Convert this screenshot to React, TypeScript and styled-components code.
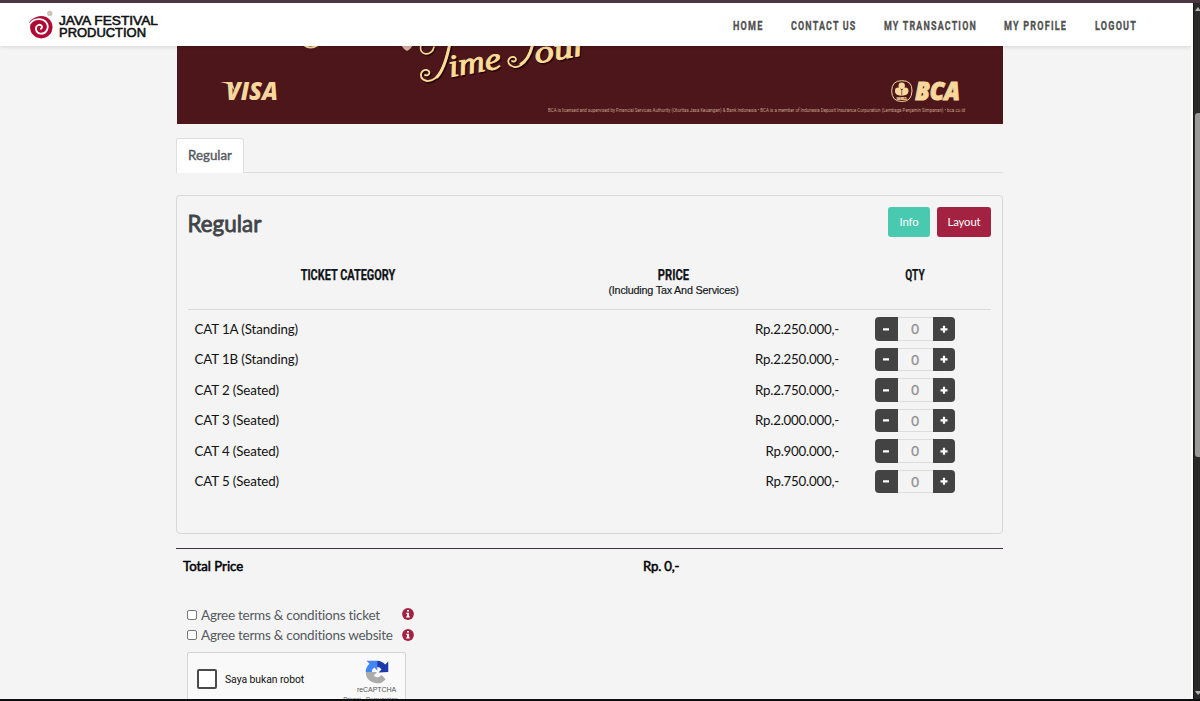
import React from 'react';
import styled, { createGlobalStyle } from 'styled-components';

const Global = createGlobalStyle`
  * { box-sizing: border-box; }
  body { margin: 0; background: #f4f4f4; font-family: Lato, "Liberation Sans", sans-serif; color: #111; }
`;

const Screen = styled.div`
  width: 1200px;
  height: 701px;
  overflow: hidden;
  display: flex;
  flex-direction: column;
  border-top: 3px solid #4b3541;
  border-bottom: 2px solid #0d0d0f;
`;
const Body = styled.div`
  flex: 1;
  min-height: 0;
  display: flex;
`;
const Page = styled.div`
  width: 1193px;
  height: 696px;
  overflow: hidden;
  border-right: 2px solid #fff;
  background: #f4f4f4;
`;
const Scrollbar = styled.div`
  width: 7px;
  height: 696px;
  background: #2b2b29;
  border-left: 1px solid #171717;
  display: flex;
  flex-direction: column;
  align-items: flex-end;
  justify-content: space-between;
  padding: 4px 0;
`;
const Thumb = styled.div`
  width: 5px;
  height: 344px;
  margin-top: -132px;
  border-radius: 3px 0 0 3px;
  background: #9b9b9a;
`;

const Header = styled.header`
  position: relative;
  z-index: 2;
  height: 43px;
  background: #fff;
  box-shadow: 0 1px 4px rgba(0, 0, 0, 0.13);
  display: flex;
  align-items: center;
  justify-content: space-between;
  padding: 0 54px 0 28px;
`;
const Nav = styled.nav`
  display: flex;
  gap: 28px;
  padding-top: 1px;
`;
const NavItem = styled.a<{ $w: number; $scale: number }>`
  width: ${p => p.$w}px;
  white-space: nowrap;
  font: 700 13.5px/20px Roboto, sans-serif;
  letter-spacing: 1.8px;
  color: #505050;
  -webkit-text-stroke: 0.3px #505050;
  transform: scaleX(${p => p.$scale});
  transform-origin: left center;
`;

const Main = styled.main`
  width: 827px;
  margin-left: 176px;
`;
const Banner = styled.div`
  height: 78px;
  margin-left: 1px;
  background: #4c161a;
  overflow: hidden;
  svg { display: block; }
`;
const Tabs = styled.div`
  display: flex;
  height: 49px;
  padding-top: 14px;
  border-bottom: 1px solid #dedede;
`;
const Tab = styled.div`
  width: 68px;
  height: 35px;
  background: #fff;
  border: 1px solid #dedede;
  border-bottom: 0;
  border-radius: 3px 3px 0 0;
  text-align: center;
  font-size: 13.3px;
  line-height: 33px;
  font-weight: 400;
  -webkit-text-stroke: 0.4px #555a60;
  color: #555a60;
`;
const Card = styled.section`
  height: 339px;
  margin-top: 22px;
  padding: 11px 11px 0;
  border: 1px solid #d8d8d8;
  border-radius: 4px;
`;
const CardHead = styled.div`
  display: flex;
  align-items: flex-start;
  height: 52px;
`;
const Title = styled.h2`
  margin: 0 0 0 -0.5px;
  flex: 1;
  font-size: 22.4px;
  line-height: 33px;
  font-weight: 400;
  -webkit-text-stroke: 0.8px #414447;
  color: #414447;
`;
const Button = styled.button<{ $w: number; $bg: string }>`
  width: ${p => p.$w}px;
  height: 30px;
  margin-left: 7px;
  padding: 0 0 2px;
  border: 0;
  border-radius: 3px;
  background: ${p => p.$bg};
  color: #fff;
  font: 400 11.3px Lato, sans-serif;
  letter-spacing: -0.1px;
`;
const TableHead = styled.div`
  display: grid;
  grid-template-columns: 320px 331px 152px;
  height: 51px;
  text-align: center;
  border-bottom: 1px solid #dadada;
  padding-top: 8px;
`;
const HeadLabel = styled.div<{ $scale: number }>`
  font: 700 14px/17px Roboto, sans-serif;
  white-space: nowrap;
  transform: scaleX(${p => p.$scale});
  color: #111518;
  -webkit-text-stroke: 0.25px #111518;
`;
const HeadNote = styled.div`
  font: 400 10.8px/13px "Liberation Sans", sans-serif;
  letter-spacing: -0.21px;
  -webkit-text-stroke: 0.15px #111518;
  color: #111518;
`;
const Rows = styled.div`
  padding-top: 3.5px;
`;
const Row = styled.div`
  display: grid;
  grid-template-columns: 420px 231px 36px 80px;
  height: 30.5px;
  align-items: center;
  font-size: 13.3px;
`;
const Name = styled.div`
  padding-left: 6.5px;
  letter-spacing: -0.1px;
`;
const Amount = styled.div`
  text-align: right;
  letter-spacing: -0.22px;
`;
const Stepper = styled.div`
  grid-column: 4;
  display: flex;
  height: 23.5px;
  border-radius: 4px;
  overflow: hidden;
`;
const Step = styled.button`
  width: 22.5px;
  padding: 0;
  border: 0;
  background: #434343;
  display: grid;
  place-items: center;
`;
const Count = styled.div`
  flex: 1;
  border: solid #dcdcdc;
  border-width: 1px 0;
  text-align: center;
  line-height: 22.5px;
  color: #929292;
  -webkit-text-stroke: 0.35px #929292;
`;
const Total = styled.div`
  display: flex;
  height: 37px;
  margin-top: 14px;
  border-top: 1px solid #3c3346;
  padding-left: 7px;
  font-size: 13.2px;
  font-weight: 400;
  line-height: 35px;
  -webkit-text-stroke: 0.5px #000;
  color: #000;
`;
const TotalLabel = styled.div`
  width: 460px;
`;
const TotalValue = styled.div`
  letter-spacing: -0.2px;
`;
const Terms = styled.div`
  padding: 19.5px 0 0 11px;
`;
const Term = styled.div`
  display: flex;
  align-items: center;
  height: 20.5px;
  color: #54595e;
  font-size: 13.5px;
  span { width: 201px; letter-spacing: -0.25px; white-space: nowrap; line-height: 18px; }
`;
const Box = styled.i<{ $size: number }>`
  display: block;
  width: ${p => p.$size}px;
  height: ${p => p.$size}px;
  border: ${p => (p.$size > 15 ? '2px solid #4a4a4a' : '1px solid #777')};
  border-radius: 2px;
  background: #fff;
  margin-right: ${p => (p.$size > 15 ? 8.5 : 4)}px;
`;
const Captcha = styled.div`
  display: flex;
  width: 219px;
  height: 56px;
  margin: 6px 0 0 11px;
  padding-left: 8.5px;
  border: 1px solid #d3d3d3;
  border-radius: 2px;
  background: #f9f9f9;
  font: 400 10.4px Roboto, sans-serif;
  letter-spacing: -0.06px;
`;
const CaptchaCheck = styled.div`
  display: flex;
  align-items: center;
  width: 147px;
  height: 53px;
`;
const CaptchaBrand = styled.div`
  width: 66px;
  display: flex;
  flex-direction: column;
  align-items: center;
  padding: 7px 0 0 9px;
  font: 400 7px/12px "Liberation Sans", sans-serif;
  color: #555;
  white-space: nowrap;
`;
const Legal = styled.small`
  font-size: 6px;
  line-height: 7px;
  margin: 0 12px 0 0;
`;

const Logo = () => (
  <svg width="134" height="34" viewBox="28 8 134 34">
    <circle cx="49.8" cy="13.4" r="2.7" fill="#cbc4b9" />
    <circle cx="41.3" cy="27.2" r="11.2" fill="#ae0c37" />
    <path d="M29 22.5Q33 16.5 39 17.6L46 18.6Q36 17 32 23Z" fill="#ae0c37" />
    <path d="M30.4 23.2C34 18.3 42.5 17.6 46.3 22.5C50 27.5 46 34.4 40.3 33.6C35.4 32.7 34.4 26.6 38.4 25C41.4 24 43.3 27.5 40.9 28.8" fill="none" stroke="#fff" strokeWidth="1.8" strokeLinecap="round" />
    <g fontFamily="Liberation Sans" fontSize="12.3" fill="#111" stroke="#111" strokeWidth=".55">
      <text x="59" y="24.7" textLength="99" lengthAdjust="spacingAndGlyphs">JAVA FESTIVAL</text>
      <text x="59" y="36.7" textLength="87" lengthAdjust="spacingAndGlyphs">PRODUCTION</text>
    </g>
  </svg>
);

const BannerArt = () => (
  <svg width="826" height="78" viewBox="177 46 826 78">
    <path d="M304 45Q310 50 318 45" fill="none" stroke="#f5d99b" strokeWidth="2" />
    <path d="M401 45h12l-3 4l-3 2l-3-2z" fill="#d9b1a0" />
    {['#260709', '#fbdd97'].map((c, i) => (
      <g key={c} transform={i ? undefined : 'translate(1.3 1.5)'} fill="none" stroke={c} strokeLinecap="round">
        <path d="M421 45C418 56 432 57 434 47" strokeWidth="1.6" />
        <path d="M450 43C446 61 440 82 427 81C418 79 420 69 427 70C432 72 428 77 425 75" strokeWidth="1.8" />
        <path d="M450 43C447 58 443 71 437 77" strokeWidth="3" />
        <path d="M533 43C529 56 524 68 514 67C505 64 508 56 514 57C518 59 515 63 512 61" strokeWidth="1.8" />
        <path d="M533 43C531 52 527 61 521 64" strokeWidth="3" />
        <g fill={c} stroke={c} strokeWidth=".9" fontFamily="Liberation Serif" fontStyle="italic">
          <text transform="translate(450 77) rotate(-10)" fontSize="31" textLength="53" lengthAdjust="spacingAndGlyphs">ime</text>
          <text transform="translate(536 63.5) rotate(-10)" fontSize="31" textLength="54" lengthAdjust="spacingAndGlyphs">our</text>
        </g>
      </g>
    ))}
    <g fill="#f7d79c" fontFamily="Open Sans" fontWeight="800" fontStyle="italic">
      <text x="226" y="100.2" fontSize="25" textLength="52" lengthAdjust="spacingAndGlyphs">VISA</text>
      <path d="M220 82h12l3 9l-5-6q-4-2-10-3z" />
      <text x="915" y="100.2" fontSize="25" textLength="45" lengthAdjust="spacingAndGlyphs" stroke="#f7d79c" strokeWidth="1">BCA</text>
    </g>
    <path d="M901.7 80.7Q891.7 80.7 891.7 91T901.7 101.5T912 91T901.7 80.7Z" fill="none" stroke="#f7d79c" strokeWidth="1" />
    <g fill="#f7d79c">
      <circle cx="901.7" cy="85.8" r="3.2" />
      <circle cx="898" cy="90.5" r="3" />
      <circle cx="905.4" cy="90.5" r="3" />
      <path d="M895 91q0 4.5 6.2 4.7h1q6.2-.2 6.2-4.7l-4-1h-5z" />
      <path d="M901.7 90v5.5" stroke="#4c161a" strokeWidth=".6" />
      <text x="896.5" y="100" fontFamily="Roboto" fontWeight="700" fontSize="3.6" textLength="10.5">BANK BCA</text>
    </g>
    <text x="548" y="111.8" fill="#c9a18c" fontFamily="Roboto" fontSize="4.7" textLength="417" lengthAdjust="spacingAndGlyphs">
      BCA is licensed and supervised by Financial Services Authority (Otoritas Jasa Keuangan) &amp; Bank Indonesia • BCA is a member of Indonesia Deposit Insurance Corporation (Lembaga Penjamin Simpanan) • bca.co.id
    </text>
  </svg>
);

const Sign = ({ plus }: { plus?: boolean }) => (
  <svg width="8" height="8" viewBox="0 0 8 8">
    <path d={plus ? 'M.5 4.3h7M4 .8v7' : 'M1 4.3h6'} stroke="#fff" strokeWidth="2.2" />
  </svg>
);

const InfoSvg = styled.svg`
  margin-top: -1.5px;
`;
const InfoIcon = () => (
  <InfoSvg width="12" height="12" viewBox="0 0 12 12">
    <circle cx="6" cy="6" r="5.9" fill="#a32242" />
    <path d="M5 2h2v1.6H5zM4.3 4.7H7v3.5h.8v1.3H4.2V8.2H5V6h-.7z" fill="#fff" />
  </InfoSvg>
);

const RecaptchaIcon = () => (
  <svg width="24" height="24" viewBox="0 0 64 64">
    <path d="M62 32V4l-8 8A30 30 0 0 0 32 2v16a14 14 0 0 1 12 7l-8 8z" fill="#1c3aa9" />
    <path d="M32 2H4l8 8A30 30 0 0 0 2 32h16a14 14 0 0 1 7-12l8 8V2z" fill="#4285f4" />
    <path d="M2 32a30 30 0 0 0 53 19L44 40a14 14 0 0 1-21 2l9-10z" fill="#ababab" />
  </svg>
);

const nav: [string, number, number][] = [
  ['HOME', 30, 0.67],
  ['CONTACT US', 65, 0.66],
  ['MY TRANSACTION', 92, 0.66],
  ['MY PROFILE', 63, 0.67],
  ['LOGOUT', 42, 0.67],
];

const tickets = [
  ['CAT 1A (Standing)', 'Rp.2.250.000,-'],
  ['CAT 1B (Standing)', 'Rp.2.250.000,-'],
  ['CAT 2 (Seated)', 'Rp.2.750.000,-'],
  ['CAT 3 (Seated)', 'Rp.2.000.000,-'],
  ['CAT 4 (Seated)', 'Rp.900.000,-'],
  ['CAT 5 (Seated)', 'Rp.750.000,-'],
];

export default function App() {
  return (
    <Screen>
      <Global />
      <Body>
        <Page>
          <Header>
            <Logo />
            <Nav>
              {nav.map(([label, w, s]) => (
                <NavItem key={label} $w={w} $scale={s}>{label}</NavItem>
              ))}
            </Nav>
          </Header>
          <Main>
            <Banner><BannerArt /></Banner>
            <Tabs><Tab>Regular</Tab></Tabs>
            <Card>
              <CardHead>
                <Title>Regular</Title>
                <Button $w={42} $bg="#48c9b0">Info</Button>
                <Button $w={54} $bg="#a32242">Layout</Button>
              </CardHead>
              <TableHead>
                <HeadLabel $scale={0.78}>TICKET CATEGORY</HeadLabel>
                <div>
                  <HeadLabel $scale={0.8}>PRICE</HeadLabel>
                  <HeadNote>(Including Tax And Services)</HeadNote>
                </div>
                <HeadLabel $scale={0.72}>QTY</HeadLabel>
              </TableHead>
              <Rows>
                {tickets.map(([name, price]) => (
                  <Row key={name}>
                    <Name>{name}</Name>
                    <Amount>{price}</Amount>
                    <Stepper>
                      <Step><Sign /></Step>
                      <Count>0</Count>
                      <Step><Sign plus /></Step>
                    </Stepper>
                  </Row>
                ))}
              </Rows>
            </Card>
            <Total>
              <TotalLabel>Total Price</TotalLabel>
              <TotalValue>Rp. 0,-</TotalValue>
            </Total>
            <Terms>
              <Term><Box $size={10} /><span>Agree terms &amp; conditions ticket</span><InfoIcon /></Term>
              <Term><Box $size={10} /><span>Agree terms &amp; conditions website</span><InfoIcon /></Term>
            </Terms>
            <Captcha>
              <CaptchaCheck><Box $size={20} />Saya bukan robot</CaptchaCheck>
              <CaptchaBrand>
                <RecaptchaIcon />
                reCAPTCHA
                <Legal>Privasi - Persyaratan</Legal>
              </CaptchaBrand>
            </Captcha>
          </Main>
        </Page>
        <Scrollbar>
          <svg width="5" height="4" viewBox="0 0 5 4"><path d="M0 4L3 0L5 3V4Z" fill="#b5b5b5" /></svg>
          <Thumb />
          <svg width="5" height="4" viewBox="0 0 5 4"><path d="M0 0H5V2L3 4Z" fill="#b5b5b5" /></svg>
        </Scrollbar>
      </Body>
    </Screen>
  );
}
